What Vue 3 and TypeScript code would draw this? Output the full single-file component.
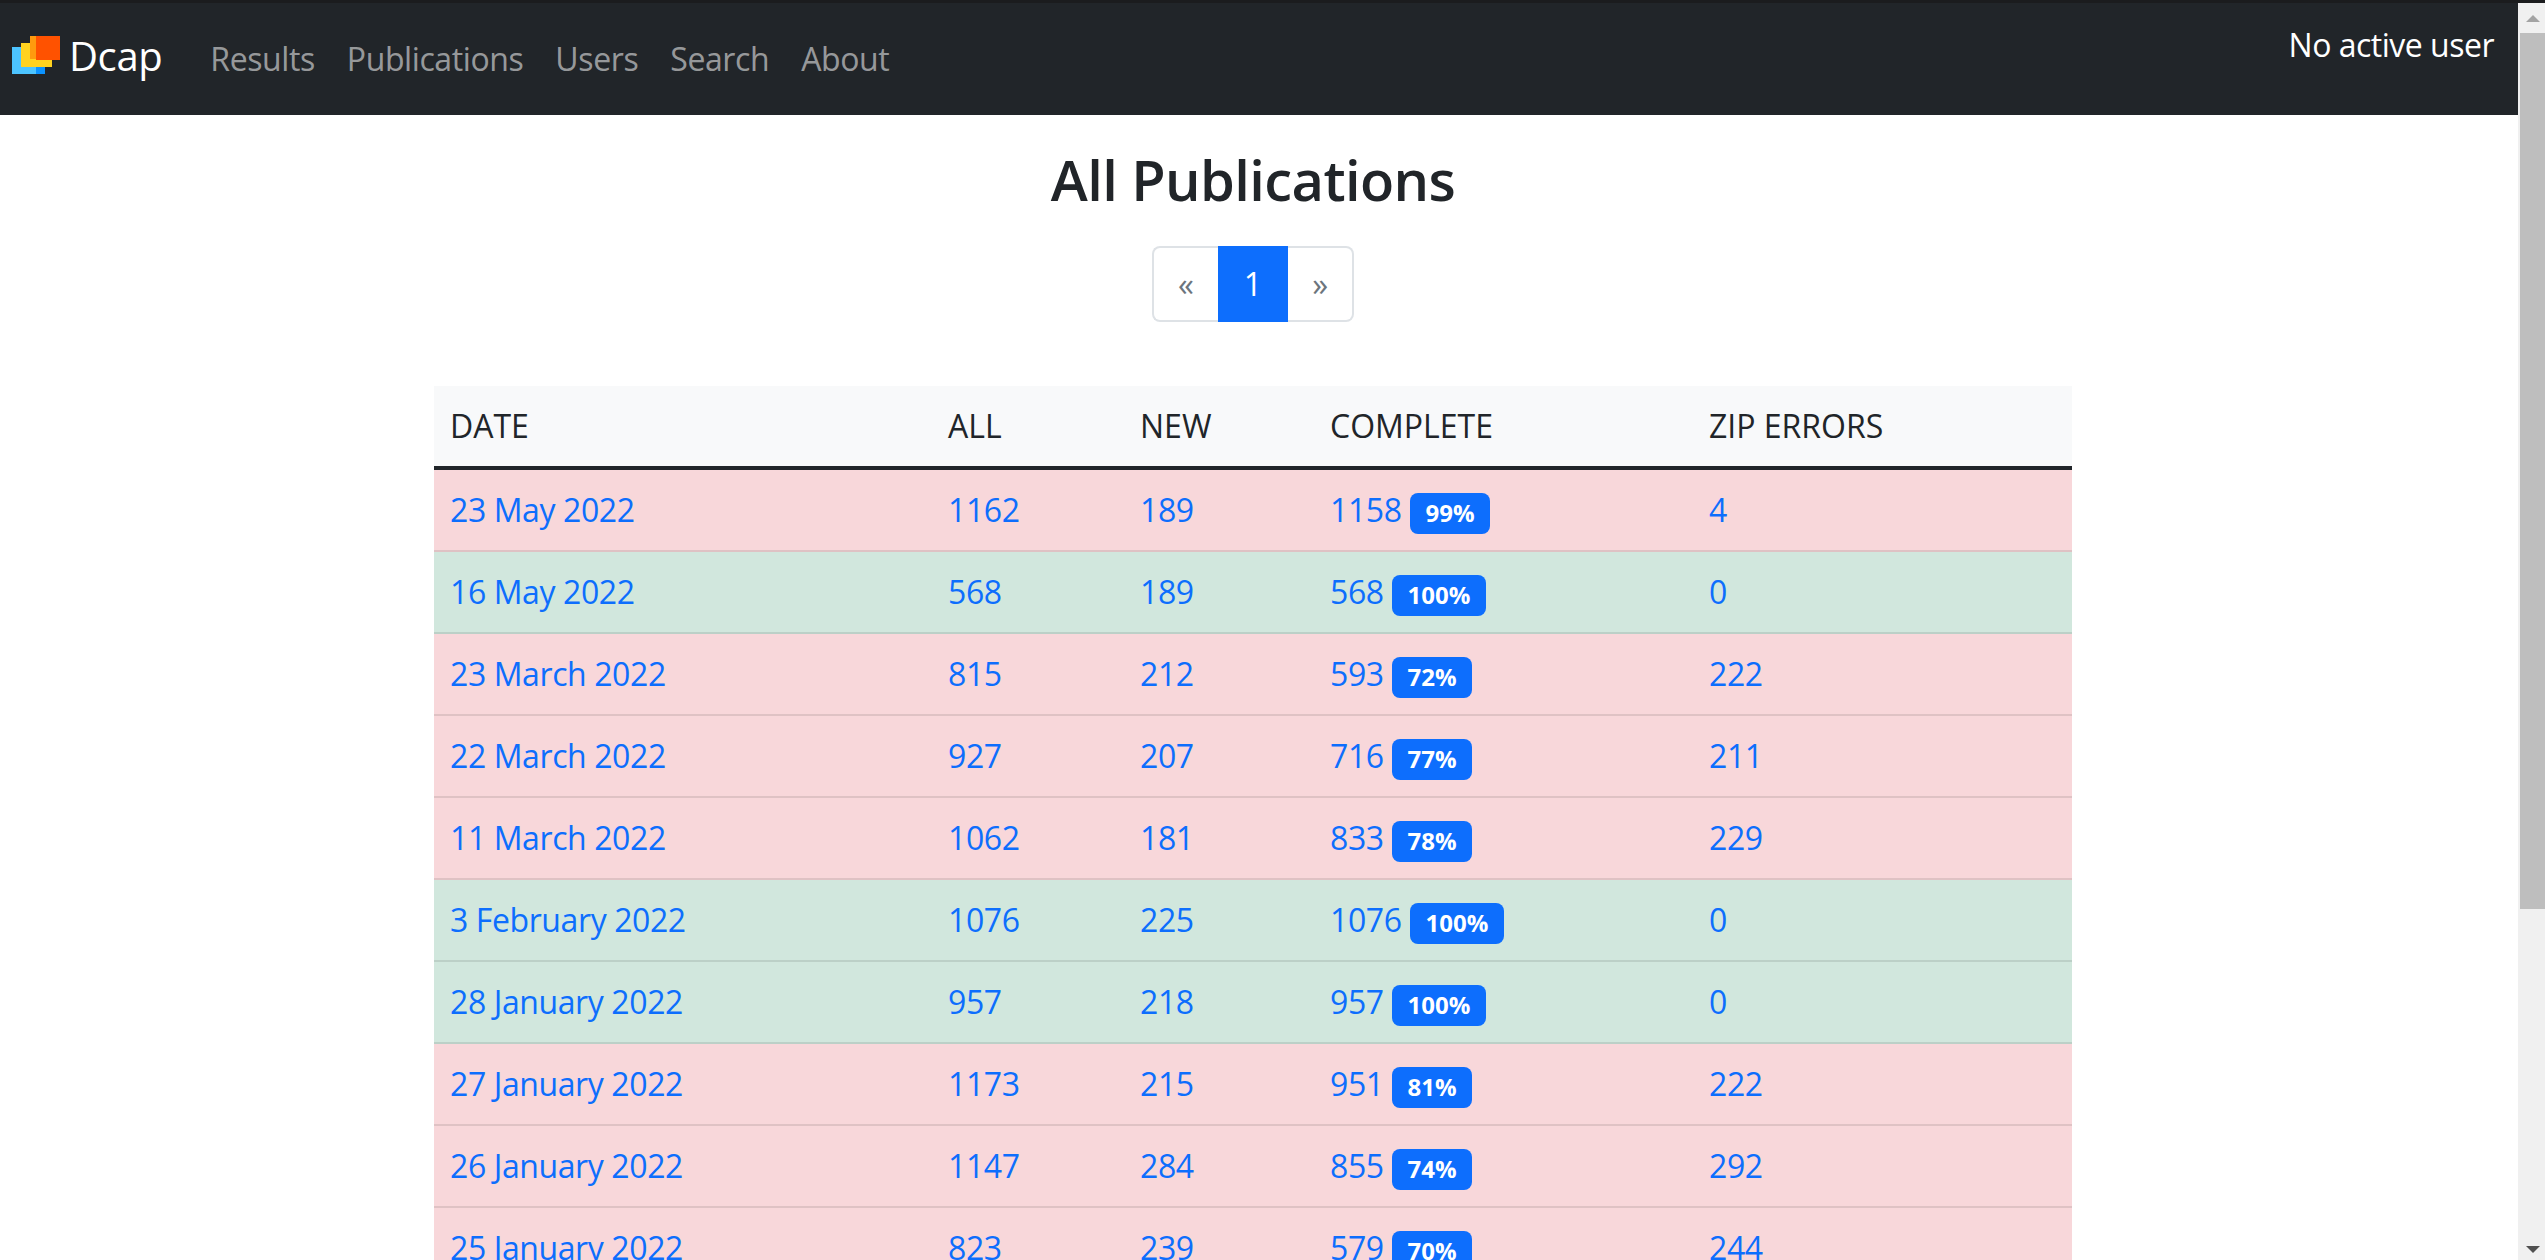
<script setup lang="ts">
type Publication = {
  date: string;
  all: number;
  fresh: number;
  complete: number;
  percent: number;
  zipErrors: number;
};

const navLinks = ['Results', 'Publications', 'Users', 'Search', 'About'];

const publications: Publication[] = [
  { date: '23 May 2022', all: 1162, fresh: 189, complete: 1158, percent: 99, zipErrors: 4 },
  { date: '16 May 2022', all: 568, fresh: 189, complete: 568, percent: 100, zipErrors: 0 },
  { date: '23 March 2022', all: 815, fresh: 212, complete: 593, percent: 72, zipErrors: 222 },
  { date: '22 March 2022', all: 927, fresh: 207, complete: 716, percent: 77, zipErrors: 211 },
  { date: '11 March 2022', all: 1062, fresh: 181, complete: 833, percent: 78, zipErrors: 229 },
  { date: '3 February 2022', all: 1076, fresh: 225, complete: 1076, percent: 100, zipErrors: 0 },
  { date: '28 January 2022', all: 957, fresh: 218, complete: 957, percent: 100, zipErrors: 0 },
  { date: '27 January 2022', all: 1173, fresh: 215, complete: 951, percent: 81, zipErrors: 222 },
  { date: '26 January 2022', all: 1147, fresh: 284, complete: 855, percent: 74, zipErrors: 292 },
  { date: '25 January 2022', all: 823, fresh: 239, complete: 579, percent: 70, zipErrors: 244 },
];
</script>

<template>
  <div class="window">
    <div class="top-line"></div>
    <div class="viewport">
      <div class="page">
        <nav class="navbar">
          <a class="brand" href="#">
            <svg class="logo" width="48" height="38" viewBox="0 0 48 38">
              <rect x="0" y="11" width="33" height="27" fill="#4cc4ff" />
              <rect x="24" y="11" width="9" height="27" fill="#0b93ff" />
              <rect x="9" y="7" width="31" height="24" fill="#ffd21f" />
              <rect x="18" y="0" width="30" height="23" fill="#ff9a0e" />
              <rect x="24" y="0" width="24" height="24" fill="#ff5200" />
            </svg>
            <span>Dcap</span>
          </a>
          <ul class="nav-links">
            <li v-for="link in navLinks" :key="link"><a href="#">{{ link }}</a></li>
          </ul>
          <span class="user">No active user</span>
        </nav>

        <main class="content">
          <h1>All Publications</h1>
          <ul class="pagination">
            <li><a href="#">«</a></li>
            <li class="active"><a href="#">1</a></li>
            <li><a href="#">»</a></li>
          </ul>

          <table class="table">
            <colgroup>
              <col class="col-date" />
              <col class="col-all" />
              <col class="col-new" />
              <col class="col-complete" />
              <col />
            </colgroup>
            <thead>
              <tr>
                <th>DATE</th>
                <th>ALL</th>
                <th>NEW</th>
                <th>COMPLETE</th>
                <th>ZIP ERRORS</th>
              </tr>
            </thead>
            <tbody>
              <tr
                v-for="item in publications"
                :key="item.date"
                :class="item.zipErrors === 0 ? 'ok' : 'failed'"
              >
                <td><a href="#">{{ item.date }}</a></td>
                <td><a href="#">{{ item.all }}</a></td>
                <td><a href="#">{{ item.fresh }}</a></td>
                <td>
                  <a href="#">{{ item.complete }}</a>
                  {{ ' ' }}
                  <span class="badge">{{ item.percent }}%</span>
                </td>
                <td><a href="#">{{ item.zipErrors }}</a></td>
              </tr>
            </tbody>
          </table>
        </main>
      </div>

      <div class="scrollbar">
        <div class="arrow-box"><span class="arrow up"></span></div>
        <div class="track"><div class="thumb"></div></div>
        <div class="arrow-box bottom"><span class="arrow down"></span></div>
      </div>
    </div>
  </div>
</template>

<style scoped>
* {
  box-sizing: border-box;
}

.window {
  height: 1260px;
  display: flex;
  flex-direction: column;
  overflow: hidden;
  font-family: "Open Sans", "Noto Sans", sans-serif;
  font-size: 32px;
  line-height: 1.5;
  color: #212529;
  background: #fff;
}

.top-line {
  height: 3px;
  flex: none;
  background: #1b1c1e;
}

.viewport {
  flex: 1;
  min-height: 0;
  display: flex;
}

.page {
  flex: 1;
  min-width: 0;
  overflow: hidden;
}

a {
  text-decoration: none;
}

.navbar {
  height: 112px;
  display: flex;
  align-items: flex-start;
  padding: 0 24px 0 12px;
  background: #212529;
}

.brand {
  display: flex;
  align-items: flex-start;
  gap: 9px;
  margin-top: 33px;
  font-size: 40px;
  line-height: 1;
  letter-spacing: -0.4px;
  color: #fff;
}

.logo {
  display: block;
}

.nav-links {
  display: flex;
  list-style: none;
  margin: 32px 0 0 32px;
  padding: 0;
  letter-spacing: -0.4px;
}

.nav-links a {
  display: block;
  padding: 0 16px;
  color: rgba(255, 255, 255, 0.55);
}

.user {
  margin-left: auto;
  margin-top: 18px;
  letter-spacing: -0.5px;
  color: #fff;
}

.content {
  padding: 31px 12px 0 0;
  display: flex;
  flex-direction: column;
  align-items: center;
}

h1 {
  margin: 0 0 33px;
  font-size: 56px;
  font-weight: 600;
  line-height: 1.2;
  letter-spacing: -0.6px;
  text-align: center;
}

.pagination {
  display: flex;
  list-style: none;
  margin: 0 0 64px;
  padding: 0;
}

.pagination li a {
  display: block;
  height: 76px;
  padding: 12px 24px;
  background: #fff;
  border: 2px solid #dee2e6;
  color: #6c757d;
}

.pagination li:first-child a {
  border-right: 0;
  border-radius: 8px 0 0 8px;
}

.pagination li:last-child a {
  border-left: 0;
  border-radius: 0 8px 8px 0;
}

.pagination li.active a {
  background: #0d6efd;
  border-color: #0d6efd;
  color: #fff;
}

.table {
  width: 1638px;
  flex: none;
  table-layout: fixed;
  border-collapse: collapse;
}

.col-date {
  width: 498px;
}

.col-all {
  width: 192px;
}

.col-new {
  width: 190px;
}

.col-complete {
  width: 379px;
}

th {
  height: 82px;
  padding: 16px;
  text-align: left;
  font-weight: 400;
  background: #f8f9fa;
  border-bottom: 4px solid #212529;
}

td {
  height: 82px;
  padding: 16px;
  border-bottom: 2px solid;
}

td a {
  letter-spacing: -0.4px;
  color: #0d6efd;
}

.failed td {
  background: #f8d7da;
  border-bottom-color: #dfc2c4;
}

.ok td {
  background: #d1e7dd;
  border-bottom-color: #bcd0c7;
}

.badge {
  display: inline-block;
  padding: 8.4px 15.6px;
  border-radius: 8px;
  font-size: 24px;
  font-weight: 700;
  line-height: 1;
  color: #fff;
  background: #0d6efd;
  vertical-align: baseline;
}

.scrollbar {
  width: 27px;
  flex: none;
  display: flex;
  flex-direction: column;
  background: #f0f0f0;
}

.arrow-box {
  height: 30px;
  flex: none;
  display: flex;
  justify-content: center;
  padding: 12px 0 0 3px;
}

.arrow-box.bottom {
  height: 21px;
  padding-top: 7px;
}

.arrow {
  width: 0;
  height: 0;
  border-left: 7px solid transparent;
  border-right: 7px solid transparent;
}

.arrow.up {
  border-bottom: 7px solid #a3a3a3;
}

.arrow.down {
  border-top: 7px solid #505050;
}

.track {
  flex: 1;
  padding-left: 2px;
}

.thumb {
  height: 876px;
  background: #bebebe;
}
</style>

<style>
html,
body {
  overflow: hidden;
}
</style>
